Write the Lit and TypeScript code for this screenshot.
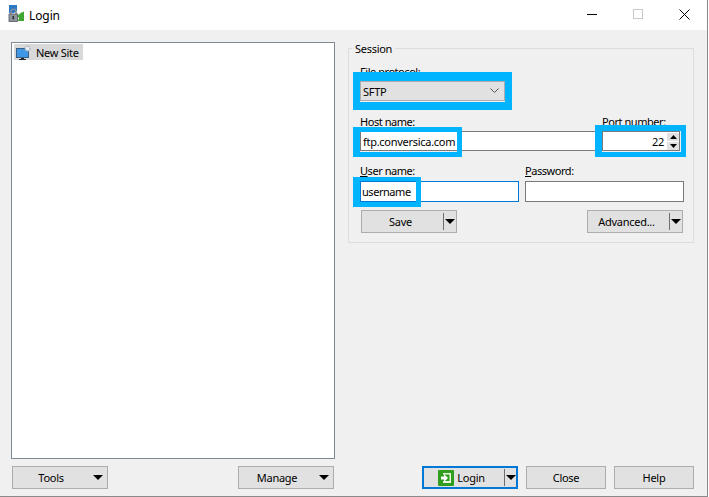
import { LitElement, html, css } from "lit";
import { customElement } from "lit/decorators.js";

const arrow = html`<svg class="tri" width="10" height="5" viewBox="0 0 10 5"><path d="M0 0H10L5 5Z" fill="#000"/></svg>`;

@customElement("app-root")
export class AppRoot extends LitElement {
  static styles = css`
    :host { display: block; width: 709px; height: 497px; font-family: "Noto Sans", "Open Sans", sans-serif; font-size: 11px; letter-spacing: -0.28px; color: #000; overflow: hidden; }
    * { box-sizing: border-box; }
    .window { width: 708px; height: 497px; border-right: 1px solid #8a8a8a; border-bottom: 1px solid #8a8a8a; background: #f0f0f0; display: flex; flex-direction: column; }
    .titlebar { height: 30px; background: #fff; display: flex; align-items: center; padding-left: 8px; flex: none; }
    .appicon { margin-top: -3px; }
    .title { margin-left: 4px; font-size: 12px; letter-spacing: -0.1px; }
    .winbtns { margin-left: auto; display: flex; align-items: center; padding-bottom: 2px; }
    .wb { width: 46px; height: 28px; display: flex; align-items: center; justify-content: center; }
    .main { flex: 1; display: flex; padding: 12px 13px 7px 11px; gap: 13px; }
    .left { width: 324px; display: flex; flex-direction: column; }
    .tree { height: 417px; background: #fff; border: 1px solid #7f8a96; padding: 1px 2px; }
    .node { display: inline-flex; align-items: center; height: 16px; width: 69px; background: #d9d9d9; }
    .node svg { margin-right: 5px; flex: none; }
    .leftbtns { display: flex; justify-content: space-between; padding: 7px 1px 0 1px; }
    .btn { height: 23px; background: #e1e1e1; border: 1px solid #adadad; display: flex; align-items: center; justify-content: center; position: relative; flex: none; }
    .w96 { width: 96px; }
    .w80 { width: 80px; }
    .menu { padding-right: 18px; }
    .menu .tri { position: absolute; right: 4px; top: 8px; }
    .split { padding-right: 17px; }
    .split::after { content: ""; position: absolute; right: 12px; top: 2px; bottom: 2px; width: 1px; background: #6e6e6e; }
    .split .tri { position: absolute; right: 1px; top: 8px; }
    .right { flex: 1; display: flex; flex-direction: column; justify-content: space-between; }
    .session { margin-top: 6px; width: 346px; height: 195px; border: 1px solid #dcdcdc; padding: 15px 9px 0 11px; position: relative; }
    .legend { position: absolute; left: 3px; top: -7px; background: #f0f0f0; padding: 0 3px; line-height: 13px; }
    .field { position: relative; display: flex; flex-direction: column; }
    .lbl { line-height: 14px; height: 17px; padding-top: 1px; white-space: nowrap; letter-spacing: -0.45px; }
    .lbl.tall { height: 18px; }
    .lbl u { text-decoration: underline; text-underline-offset: 1px; }
    .combo { width: 145px; height: 20px; background: #e1e1e1; border: 1px solid #adadad; display: flex; align-items: center; padding: 0 5px 0 2px; justify-content: space-between; }
    .row { display: flex; }
    .row1 { margin-top: 13px; gap: 6px; }
    .row2 { margin-top: 12px; gap: 6px; }
    .input { height: 20px; background: #fff; border: 1px solid #7a7a7a; display: flex; align-items: center; padding-left: 2px; white-space: nowrap; }
    .input.focus { border-color: #0078d7; letter-spacing: -0.45px; padding-left: 1px; }
    .host { width: 236px; }
    .port { width: 78px; justify-content: flex-end; padding-right: 15px; position: relative; }
    .spin { position: absolute; right: 0; top: 1px; width: 12px; display: flex; flex-direction: column; gap: 1px; }
    .spin span { height: 8px; background: #e1e1e1; display: flex; align-items: center; justify-content: center; }
    .user, .pass { width: 159px; height: 21px; }
    .savebar { display: flex; justify-content: space-between; margin-top: 8px; padding: 0 1px; width: 324px; }
    .hl { position: absolute; border: 5px solid #00b4ff; border-left-width: 7px; pointer-events: none; }
    .hl1 { left: -7px; top: 8px; width: 159px; height: 38px; border-width: 9px 7px 8px; }
    .hl2 { left: -7px; top: 13px; width: 109px; height: 30px; }
    .hl3 { left: -7px; top: 11px; width: 91px; height: 32px; border-top-width: 6px; }
    .hl4 { left: -7px; top: 14px; width: 68px; height: 30px; border-top-width: 4px; }
    .bottom { display: flex; justify-content: flex-end; gap: 8px; }
    .login { border: 2px solid #0078d7; }
    .login::after { right: 11px; top: 1px; bottom: 1px; }
    .login .tri { right: 0; top: 7px; }
    .login svg.ico { margin-right: 3px; }
  `;

  render() {
    return html`
      <div class="window">
        <div class="titlebar">
          <svg class="appicon" width="17" height="17" viewBox="0 0 17 17">
            <path d="M1 0h8v6L6 8H1Z" fill="#2a78c8"/>
            <path d="M7 6l3.500 4 2-2 3.500-1.500V16H9.500L11 13.500Z" fill="#3fa535"/>
            <path d="M3 9V6.600a2.500 2.500 0 0 1 5 0V9" fill="none" stroke="#8a8f96" stroke-width="1.400"/>
            <rect x="1" y="9" width="8.500" height="7.500" fill="#8f959c" stroke="#55595f" stroke-width=".8"/>
            <rect x="4.500" y="11" width="1.600" height="3.400" fill="#2c2f33"/>
          </svg>
          <span class="title">Login</span>
          <div class="winbtns">
            <div class="wb"><svg width="10" height="10" viewBox="0 0 10 10"><path d="M0 5.500H10" stroke="#000" stroke-width="1"/></svg></div>
            <div class="wb"><svg width="10" height="10" viewBox="0 0 10 10"><rect x=".5" y=".5" width="9" height="9" fill="none" stroke="#c8c8c8"/></svg></div>
            <div class="wb"><svg width="11" height="11" viewBox="0 0 11 11"><path d="M.5.500 10.500 10.500M10.500.500 .5 10.500" stroke="#000" stroke-width="1"/></svg></div>
          </div>
        </div>
        <div class="main">
          <div class="left">
            <div class="tree">
              <div class="node">
                <svg width="17" height="16" viewBox="0 0 17 16">
                  <rect x="2.500" y="4.500" width="12" height="9" fill="#3f97e6" stroke="#3a5f86" stroke-width="1"/>
                  <path d="M7 14H10V15H7ZM5 15H12V16H5Z" fill="#22262c"/>
                  <circle cx="13.500" cy="4.500" r="2.300" fill="#eef3f8" stroke="#a9b6c4" stroke-width="1.600" stroke-dasharray="1.300 .8"/>
                </svg>
                New Site
              </div>
            </div>
            <div class="leftbtns">
              <div class="btn w96 menu">Tools${arrow}</div>
              <div class="btn w96 menu">Manage${arrow}</div>
            </div>
          </div>
          <div class="right">
            <div class="session">
              <div class="legend">Session</div>
              <div class="field">
                <div class="lbl"><u>F</u>ile protocol:</div>
                <div class="combo">SFTP
                  <svg width="9" height="6" viewBox="0 0 9 6"><path d="M.5.500 4.500 4.500 8.500.5" fill="none" stroke="#555"/></svg>
                </div>
                <div class="hl hl1"></div>
              </div>
              <div class="row row1">
                <div class="field">
                  <div class="lbl"><u>H</u>ost name:</div>
                  <div class="input host">ftp.conversica.com</div>
                  <div class="hl hl2"></div>
                </div>
                <div class="field">
                  <div class="lbl">Port number:</div>
                  <div class="input port">22
                    <div class="spin">
                      <span><svg width="7" height="4" viewBox="0 0 7 4"><path d="M3.500 0 7 4H0Z" fill="#000"/></svg></span>
                      <span><svg width="7" height="4" viewBox="0 0 7 4"><path d="M0 0H7L3.500 4Z" fill="#000"/></svg></span>
                    </div>
                  </div>
                  <div class="hl hl3"></div>
                </div>
              </div>
              <div class="row row2">
                <div class="field">
                  <div class="lbl tall"><u>U</u>ser name:</div>
                  <div class="input user focus">username</div>
                  <div class="hl hl4"></div>
                </div>
                <div class="field">
                  <div class="lbl tall"><u>P</u>assword:</div>
                  <div class="input pass"></div>
                </div>
              </div>
              <div class="savebar">
                <div class="btn w96 split">Save${arrow}</div>
                <div class="btn w96 split">Advanced...${arrow}</div>
              </div>
            </div>
            <div class="bottom">
              <div class="btn w96 split login">
                <svg class="ico" width="16" height="16" viewBox="0 0 16 16">
                  <rect width="16" height="16" rx="1" fill="#2f9e1f"/>
                  <path d="M5 3H13V13H5V11H11.500V4.500H5Z" fill="#e8f6e0"/>
                  <path d="M3 6.500H6V4L10 8 6 12V9.500H3Z" fill="#fff"/>
                </svg>
                Login${arrow}
              </div>
              <div class="btn w80">Close</div>
              <div class="btn w80">Help</div>
            </div>
          </div>
        </div>
      </div>
    `;
  }
}
